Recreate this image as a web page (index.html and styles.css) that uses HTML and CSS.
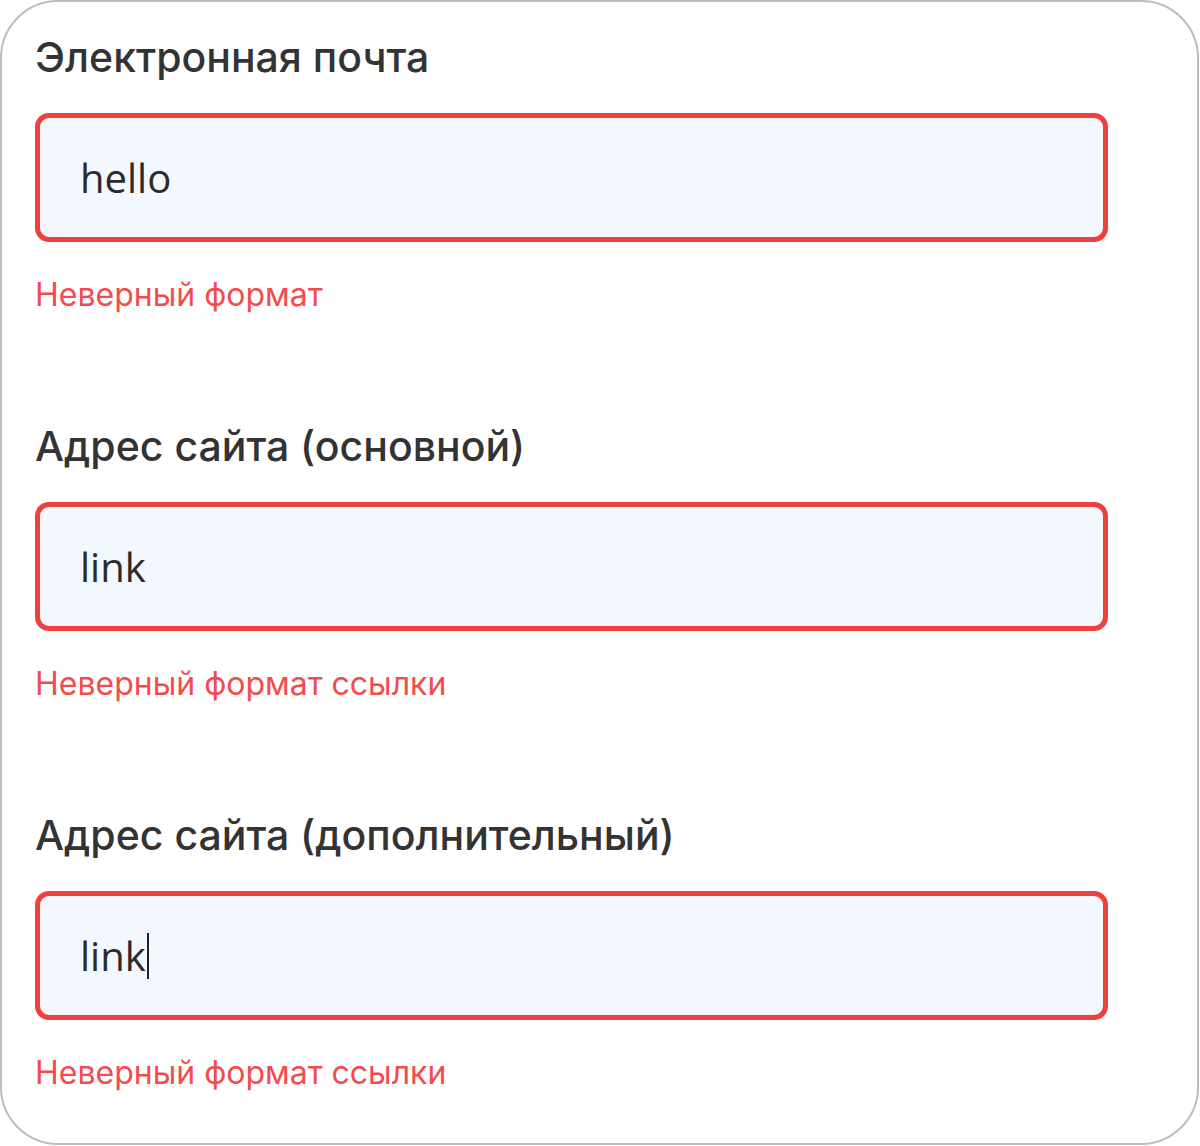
FILE: index.html
```html
<!DOCTYPE html>
<html lang="ru">
<head>
<meta charset="utf-8">
<link rel="stylesheet" href="styles.css">
</head>
<body>
<div class="card">
  <div class="field">
    <div class="label">Электронная почта</div>
    <div class="input">hello</div>
    <div class="error">Неверный формат</div>
  </div>
  <div class="field">
    <div class="label">Адрес сайта (основной)</div>
    <div class="input">link</div>
    <div class="error">Неверный формат ссылки</div>
  </div>
  <div class="field">
    <div class="label">Адрес сайта (дополнительный)</div>
    <div class="input">link<span class="caret"></span></div>
    <div class="error">Неверный формат ссылки</div>
  </div>
</div>
</body>
</html>
```
FILE: styles.css
```css
html, body {
  margin: 0;
  padding: 0;
  background: #ffffff;
}
.card {
  box-sizing: border-box;
  width: 1199px;
  height: 1145px;
  border: 2px solid #bdbdbd;
  border-radius: 58px;
  padding: 31px 89px 0 33px;
  display: flex;
  flex-direction: column;
  gap: 107px;
  font-family: Inter, "Noto Sans", sans-serif;
}
.field {
  display: flex;
  flex-direction: column;
}
.label {
  font-size: 41px;
  font-weight: 500;
  line-height: 48px;
  color: #333333;
  margin-bottom: 32px;
}
.input {
  box-sizing: border-box;
  height: 129px;
  border: 5px solid #ef4040;
  border-radius: 14px;
  background: #f3f8fe;
  padding: 0 0 0 40px;
  display: flex;
  align-items: center;
  font-family: "Open Sans", sans-serif;
  font-size: 40px;
  color: #2b2b2b;
}
.caret {
  display: inline-block;
  width: 2px;
  height: 46px;
  background: #222;
  margin-left: 1px;
}
.error {
  margin-top: 33px;
  font-size: 32px;
  line-height: 40px;
  color: #f24c4c;
}
```
